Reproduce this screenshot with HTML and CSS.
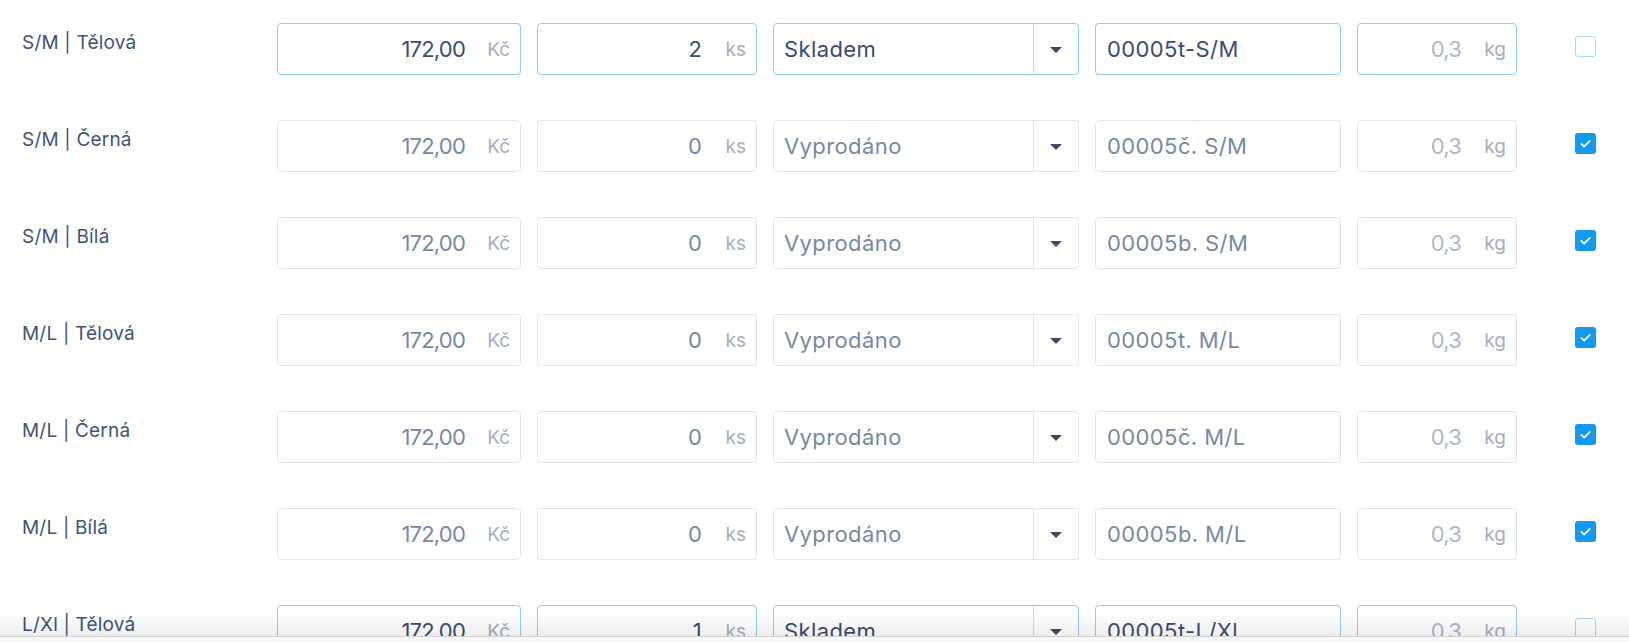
FILE: index.html
```html
<!DOCTYPE html>
<html lang="cs">
<head>
<meta charset="utf-8">
<title>Varianty</title>
<link rel="stylesheet" href="styles.css">
</head>
<body>
<div class="rows">

  <div class="row active">
    <div class="label">S/M | Tělová</div>
    <div class="field"><span class="val num">172,00</span><span class="unit">Kč</span></div>
    <div class="field"><span class="val num">2</span><span class="unit">ks</span></div>
    <div class="select"><span class="opt">Skladem</span><span class="caret"><i></i></span></div>
    <div class="field text"><span class="val">00005t-S/M</span></div>
    <div class="field weight"><span class="val num">0,3</span><span class="unit">kg</span></div>
    <div class="chk"><span class="box"></span></div>
  </div>

  <div class="row off">
    <div class="label">S/M | Černá</div>
    <div class="field"><span class="val num">172,00</span><span class="unit">Kč</span></div>
    <div class="field"><span class="val num">0</span><span class="unit">ks</span></div>
    <div class="select"><span class="opt">Vyprodáno</span><span class="caret"><i></i></span></div>
    <div class="field text"><span class="val">00005č. S/M</span></div>
    <div class="field weight"><span class="val num">0,3</span><span class="unit">kg</span></div>
    <div class="chk"><span class="box on"><svg viewBox="0 0 22 22"><path d="M6.6 11.3l3 3 5.9-6" /></svg></span></div>
  </div>

  <div class="row off">
    <div class="label">S/M | Bílá</div>
    <div class="field"><span class="val num">172,00</span><span class="unit">Kč</span></div>
    <div class="field"><span class="val num">0</span><span class="unit">ks</span></div>
    <div class="select"><span class="opt">Vyprodáno</span><span class="caret"><i></i></span></div>
    <div class="field text"><span class="val">00005b. S/M</span></div>
    <div class="field weight"><span class="val num">0,3</span><span class="unit">kg</span></div>
    <div class="chk"><span class="box on"><svg viewBox="0 0 22 22"><path d="M6.6 11.3l3 3 5.9-6" /></svg></span></div>
  </div>

  <div class="row off">
    <div class="label">M/L | Tělová</div>
    <div class="field"><span class="val num">172,00</span><span class="unit">Kč</span></div>
    <div class="field"><span class="val num">0</span><span class="unit">ks</span></div>
    <div class="select"><span class="opt">Vyprodáno</span><span class="caret"><i></i></span></div>
    <div class="field text"><span class="val">00005t. M/L</span></div>
    <div class="field weight"><span class="val num">0,3</span><span class="unit">kg</span></div>
    <div class="chk"><span class="box on"><svg viewBox="0 0 22 22"><path d="M6.6 11.3l3 3 5.9-6" /></svg></span></div>
  </div>

  <div class="row off">
    <div class="label">M/L | Černá</div>
    <div class="field"><span class="val num">172,00</span><span class="unit">Kč</span></div>
    <div class="field"><span class="val num">0</span><span class="unit">ks</span></div>
    <div class="select"><span class="opt">Vyprodáno</span><span class="caret"><i></i></span></div>
    <div class="field text"><span class="val">00005č. M/L</span></div>
    <div class="field weight"><span class="val num">0,3</span><span class="unit">kg</span></div>
    <div class="chk"><span class="box on"><svg viewBox="0 0 22 22"><path d="M6.6 11.3l3 3 5.9-6" /></svg></span></div>
  </div>

  <div class="row off">
    <div class="label">M/L | Bílá</div>
    <div class="field"><span class="val num">172,00</span><span class="unit">Kč</span></div>
    <div class="field"><span class="val num">0</span><span class="unit">ks</span></div>
    <div class="select"><span class="opt">Vyprodáno</span><span class="caret"><i></i></span></div>
    <div class="field text"><span class="val">00005b. M/L</span></div>
    <div class="field weight"><span class="val num">0,3</span><span class="unit">kg</span></div>
    <div class="chk"><span class="box on"><svg viewBox="0 0 22 22"><path d="M6.6 11.3l3 3 5.9-6" /></svg></span></div>
  </div>

  <div class="row active">
    <div class="label">L/Xl | Tělová</div>
    <div class="field"><span class="val num">172,00</span><span class="unit">Kč</span></div>
    <div class="field"><span class="val num">1</span><span class="unit">ks</span></div>
    <div class="select"><span class="opt">Skladem</span><span class="caret"><i></i></span></div>
    <div class="field text"><span class="val">00005t-L/Xl</span></div>
    <div class="field weight"><span class="val num">0,3</span><span class="unit">kg</span></div>
    <div class="chk"><span class="box"></span></div>
  </div>

</div>
<div class="footer"></div>
</body>
</html>
```

FILE: styles.css
```css
html, body {
  margin: 0;
  padding: 0;
  background: #ffffff;
  overflow: hidden;
}

body {
  font-family: Inter, "Noto Sans", sans-serif;
  color: #3e4f72;
}

.rows {
  height: 100vh;
  overflow: hidden;
  box-sizing: border-box;
  padding-top: 23px;
  display: flex;
  flex-direction: column;
  gap: 45px;
}

.row {
  display: grid;
  grid-template-columns: 261px 244px 220px 306px 246px 160px 1fr;
  column-gap: 16px;
  height: 52px;
  flex: none;
}

.label {
  padding-left: 22px;
  padding-top: 7px;
  font-size: 19px;
  line-height: 26px;
  letter-spacing: 0.2px;
  color: #41537a;
  white-space: nowrap;
}

.field,
.select {
  box-sizing: border-box;
  height: 52px;
  border: 1px solid #e1e4ef;
  border-radius: 4px;
  display: flex;
  align-items: center;
  font-size: 22px;
  background: #fff;
}

.active .field,
.active .select {
  border-color: #8fcdf5;
}

.field .val {
  flex: 1;
  text-align: right;
  padding-right: 10px;
  color: #7788a6;
  white-space: nowrap;
  letter-spacing: 0.4px;
}

.field .val.num {
  letter-spacing: -0.8px;
}

.active .field .val {
  color: #3b4c70;
}

.field .unit {
  width: 45px;
  box-sizing: border-box;
  padding-right: 10px;
  text-align: right;
  font-size: 19px;
  color: #a6aec0;
}

.field.text .val {
  text-align: left;
  padding-left: 11px;
}

.field.weight .val,
.active .field.weight .val {
  color: #aeb7c9;
}

.select .opt {
  flex: 1;
  padding-left: 10px;
  letter-spacing: 0.4px;
  color: #7788a6;
}

.active .select .opt {
  color: #3b4c70;
}

.caret {
  width: 44px;
  align-self: stretch;
  border-left: 1px solid #dfe2ec;
  display: flex;
  align-items: center;
  justify-content: center;
}

.active .caret {
  border-left-color: #cfd9e6;
}

.caret i {
  width: 0;
  height: 0;
  border-left: 6px solid transparent;
  border-right: 6px solid transparent;
  border-top: 6px solid #3d4a64;
  margin-top: 1px;
}

.chk {
  padding-left: 42px;
  padding-top: 13px;
}

.box {
  display: block;
  width: 21px;
  height: 21px;
  box-sizing: border-box;
  border: 1.5px solid #a9d6f7;
  border-radius: 3px;
  background: #fff;
}

.box.on {
  border: none;
  background: #1499f3;
}

.box svg {
  display: block;
  width: 21px;
  height: 21px;
  fill: none;
  stroke: #fff;
  stroke-width: 1.8;
  stroke-linecap: round;
  stroke-linejoin: round;
}

.footer {
  position: fixed;
  left: 0;
  right: 0;
  bottom: 0;
  height: 5px;
  background: #fafafa;
  border-top: 1px solid #e0e0e0;
}

.footer::before {
  content: "";
  position: absolute;
  left: 0;
  right: 0;
  bottom: 100%;
  height: 24px;
  background: linear-gradient(to bottom, rgba(0,0,0,0), rgba(0,0,0,0.07));
}
```
